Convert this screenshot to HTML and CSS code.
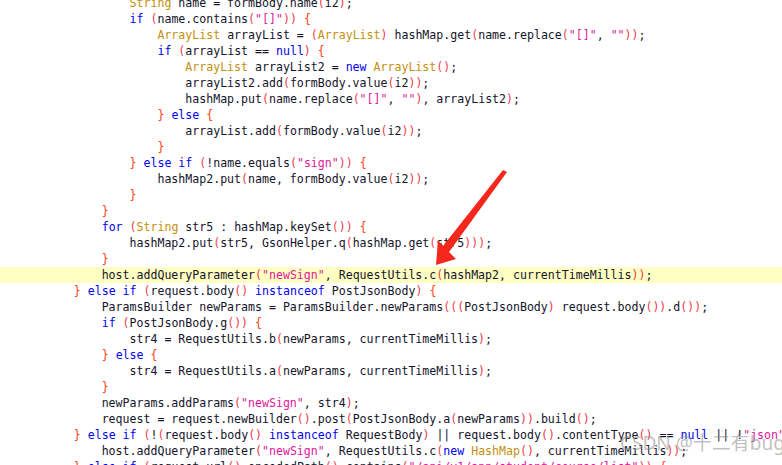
FILE: index.html
```html
<!DOCTYPE html>
<html lang="en">
<head>
    <meta charset="UTF-8">
    <title>RequestUtils sign</title>
    <link rel="stylesheet" href="styles.css">
</head>
<body>
    <div class="viewer">
        <pre class="code"><div class="line">                <span class="t">String</span> name = formBody.name<span class="p">(</span>i2<span class="p">)</span>;</div><div class="line">                <span class="k">if</span> <span class="p">(</span>name.contains<span class="p">(</span><span class="s">"[]"</span><span class="p">))</span> <span class="b">{</span></div><div class="line">                    <span class="t">ArrayList</span> arrayList = <span class="p">(</span><span class="t">ArrayList</span><span class="p">)</span> hashMap.get<span class="p">(</span>name.replace<span class="p">(</span><span class="s">"[]"</span>, <span class="s">""</span><span class="p">))</span>;</div><div class="line">                    <span class="k">if</span> <span class="p">(</span>arrayList == <span class="k">null</span><span class="p">)</span> <span class="b">{</span></div><div class="line">                        <span class="t">ArrayList</span> arrayList2 = <span class="k">new</span> <span class="t">ArrayList</span><span class="p">()</span>;</div><div class="line">                        arrayList2.add<span class="p">(</span>formBody.value<span class="p">(</span>i2<span class="p">))</span>;</div><div class="line">                        hashMap.put<span class="p">(</span>name.replace<span class="p">(</span><span class="s">"[]"</span>, <span class="s">""</span><span class="p">)</span>, arrayList2<span class="p">)</span>;</div><div class="line">                    <span class="b">}</span> <span class="k">else</span> <span class="b">{</span></div><div class="line">                        arrayList.add<span class="p">(</span>formBody.value<span class="p">(</span>i2<span class="p">))</span>;</div><div class="line">                    <span class="b">}</span></div><div class="line">                <span class="b">}</span> <span class="k">else if</span> <span class="p">(</span>!name.equals<span class="p">(</span><span class="s">"sign"</span><span class="p">))</span> <span class="b">{</span></div><div class="line">                    hashMap2.put<span class="p">(</span>name, formBody.value<span class="p">(</span>i2<span class="p">))</span>;</div><div class="line">                <span class="b">}</span></div><div class="line">            <span class="b">}</span></div><div class="line">            <span class="k">for</span> <span class="p">(</span><span class="t">String</span> str5 : hashMap.keySet<span class="p">())</span> <span class="b">{</span></div><div class="line">                hashMap2.put<span class="p">(</span>str5, GsonHelper.q<span class="p">(</span>hashMap.get<span class="p">(</span>str5<span class="p">)))</span>;</div><div class="line">            <span class="b">}</span></div><div class="line current">            host.addQueryParameter<span class="p">(</span><span class="s">"newSign"</span>, RequestUtils.c<span class="p">(</span>hashMap2, currentTimeMillis<span class="p">))</span>;</div><div class="line">        <span class="b">}</span> <span class="k">else if</span> <span class="p">(</span>request.body<span class="p">()</span> <span class="k">instanceof</span> PostJsonBody<span class="p">)</span> <span class="b">{</span></div><div class="line">            ParamsBuilder newParams = ParamsBuilder.newParams<span class="p">(((</span>PostJsonBody<span class="p">)</span> request.body<span class="p">())</span>.d<span class="p">())</span>;</div><div class="line">            <span class="k">if</span> <span class="p">(</span>PostJsonBody.g<span class="p">())</span> <span class="b">{</span></div><div class="line">                str4 = RequestUtils.b<span class="p">(</span>newParams, currentTimeMillis<span class="p">)</span>;</div><div class="line">            <span class="b">}</span> <span class="k">else</span> <span class="b">{</span></div><div class="line">                str4 = RequestUtils.a<span class="p">(</span>newParams, currentTimeMillis<span class="p">)</span>;</div><div class="line">            <span class="b">}</span></div><div class="line">            newParams.addParams<span class="p">(</span><span class="s">"newSign"</span>, str4<span class="p">)</span>;</div><div class="line">            request = request.newBuilder<span class="p">()</span>.post<span class="p">(</span>PostJsonBody.a<span class="p">(</span>newParams<span class="p">))</span>.build<span class="p">()</span>;</div><div class="line">        <span class="b">}</span> <span class="k">else if</span> <span class="p">(</span>!<span class="p">(</span>request.body<span class="p">()</span> <span class="k">instanceof</span> RequestBody<span class="p">)</span> || request.body<span class="p">()</span>.contentType<span class="p">()</span> == <span class="k">null</span> || !<span class="s">"json"</span>.equals<span class="p">(</span>request.body<span class="p">()</span>.contentType<span class="p">()</span>.subtype<span class="p">()))</span> <span class="b">{</span></div><div class="line">            host.addQueryParameter<span class="p">(</span><span class="s">"newSign"</span>, RequestUtils.c<span class="p">(</span><span class="k">new</span> <span class="t">HashMap</span><span class="p">()</span>, currentTimeMillis<span class="p">))</span>;</div><div class="line">        <span class="b">}</span> <span class="k">else if</span> <span class="p">(</span>request.url<span class="p">()</span>.encodedPath<span class="p">()</span>.contains<span class="p">(</span><span class="s">"/api/v1/app/student/course/list"</span><span class="p">))</span> <span class="b">{</span></div></pre>

        <svg class="arrow" width="782" height="465" viewBox="0 0 782 465">
            <polygon points="436,265 456,259 449,252 507,172 503,170 443,246 438,240" fill="#f5261c"/>
        </svg>

        <div class="watermark">CSDN @十二有bug</div>
    </div>
</body>
</html>
```

FILE: styles.css
```css
html, body {
    margin: 0;
    padding: 0;
    background: #ffffff;
}
.viewer {
    position: relative;
    width: 782px;
    height: 465px;
    overflow: hidden;
    background: #ffffff;
}
.code {
    margin: -5px 0 0 0;
    font-family: "DejaVu Sans Mono", "Liberation Mono", monospace;
    font-size: 11.58px;
    line-height: 16px;
    color: #14142a;
}
.line {
    height: 16px;
    padding-left: 18px;
    white-space: pre;
}
.line.current {
    background: #ffffc4;
}
.k {
    color: #0000f0;
}
.t {
    color: #c4900c;
}
.p {
    color: #f23a4e;
}
.b {
    color: #ff3d10;
}
.s {
    color: #e0169a;
}
.arrow {
    position: absolute;
    left: 0;
    top: 0;
    pointer-events: none;
}
.watermark {
    position: absolute;
    left: 620px;
    top: 428px;
    font-family: "Noto Sans", "Noto Sans CJK SC", sans-serif;
    font-size: 19px;
    color: rgba(140, 140, 140, 0.55);
    white-space: nowrap;
}
```
